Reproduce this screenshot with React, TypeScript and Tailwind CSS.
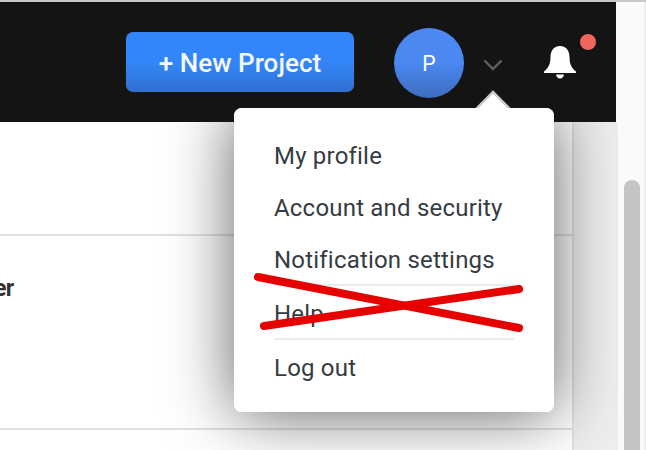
export default function App() {
  const font = "font-['Roboto',sans-serif]";
  return (
    <div className={`relative w-[646px] h-[450px] overflow-hidden bg-[#fafafa] flex flex-col ${font}`}>
      <div className="h-[2px] bg-[#c8c8c8] shrink-0" />
      <div className="flex flex-1 min-h-0">
        <div className="w-[618px] flex flex-col shrink-0">
          <header className="relative z-10 w-[616px] h-[120px] bg-[#141414] flex items-center shrink-0 pl-[126px]">
            <button className="w-[228px] h-[60px] rounded-[7px] bg-gradient-to-b from-[#3386f9] from-50% to-[#2f70d0] text-[#f4f8ff] text-[26px] font-medium tracking-[0.05px] flex items-center justify-center pt-[2px]">
              + New Project
            </button>
            <div className="ml-[40px] mt-[2px] w-[70px] h-[70px] rounded-full bg-gradient-to-b from-[#4b88f0] from-50% to-[#3e6cc0] flex items-center justify-center text-white text-[22px] font-['Inter',sans-serif]">
              P
            </div>
            <svg className="ml-[19px] mt-[6px]" width="20" height="12" viewBox="0 0 20 12" fill="none">
              <path d="M1.5 1.5 L10 10 L18.5 1.5" stroke="#5e5f67" strokeWidth="2.4" />
            </svg>
            <div className="relative ml-[41px] w-[32px] h-[32px]">
              <svg width="32" height="33" viewBox="0 0 32 33" fill="#fff">
                <path d="M16 0 C22.500 0 25.500 5 25.500 11 C25.500 18 27.500 22 32 25.500 V27 H0 V25.500 C4.500 22 6.500 18 6.500 11 C6.500 5 9.500 0 16 0 Z" />
                <path d="M12 28.500 H20 C19.500 31 18 32.500 16 32.500 C14 32.500 12.500 31 12 28.500 Z" />
              </svg>
              <span className="absolute left-[36px] top-[-12px] w-[16px] h-[16px] rounded-full bg-[#f0665c]" />
            </div>
          </header>
          <main className="relative flex-1 min-h-0 overflow-hidden bg-white flex">
            <div className="w-[574px] shrink-0 border-r-2 border-[#e2e2e2] flex flex-col">
              <div className="h-[114px] shrink-0 border-b-2 border-[#e2e2e2]" />
              <div className="h-[194px] shrink-0 border-b-2 border-[#e2e2e2] pt-[39px]">
                <span className="block -ml-[6px] leading-[28px] text-[23px] font-bold text-[#333] tracking-tight">er</span>
              </div>
            </div>
            <div className="flex-1 bg-[#eeeeee]" />
            <div className="absolute left-[234px] top-[-14px] w-[320px] h-[304px] rounded-[8px] shadow-[0_2px_66px_rgba(0,0,0,0.62)]" />
          </main>
        </div>
        <div className="w-[26px] pl-[6px] pt-[178px] shrink-0">
          <div className="w-[16px] h-[400px] rounded-t-full bg-[#c4c4c4]" />
        </div>
        <div className="w-[2px] bg-[#eeeeee] shrink-0" />
      </div>

      <div className="absolute z-20 left-[234px] top-[108px] w-[320px] h-[304px] rounded-[8px] bg-white text-[#363c42] text-[24px] tracking-[0.2px]">
        <div className="absolute left-[246px] top-[-12px] w-[26px] h-[26px] rotate-45 bg-white border-t-2 border-l-2 border-[#c4c4c4]" />
        <div className="relative bg-white rounded-[8px] h-full px-[40px] pt-[32px] flex flex-col">
          <a className="h-[52px] leading-[32px]">My profile</a>
          <a className="h-[52px] leading-[32px]">Account and security</a>
          <a className="h-[42px] leading-[32px] border-b-2 border-[#ebebeb]">Notification settings</a>
          <a className="h-[54px] pt-[12px] leading-[32px] border-b-2 border-[#ebebeb]">Help</a>
          <a className="pt-[12px] leading-[32px]">Log out</a>
        </div>
      </div>

      <svg className="absolute z-30 left-0 top-0" width="646" height="450" fill="none">
        <path d="M258 277 L519 328" stroke="#e60000" strokeWidth="8" strokeLinecap="round" />
        <path d="M264 326 L519 289" stroke="#e60000" strokeWidth="8" strokeLinecap="round" />
      </svg>
    </div>
  );
}
